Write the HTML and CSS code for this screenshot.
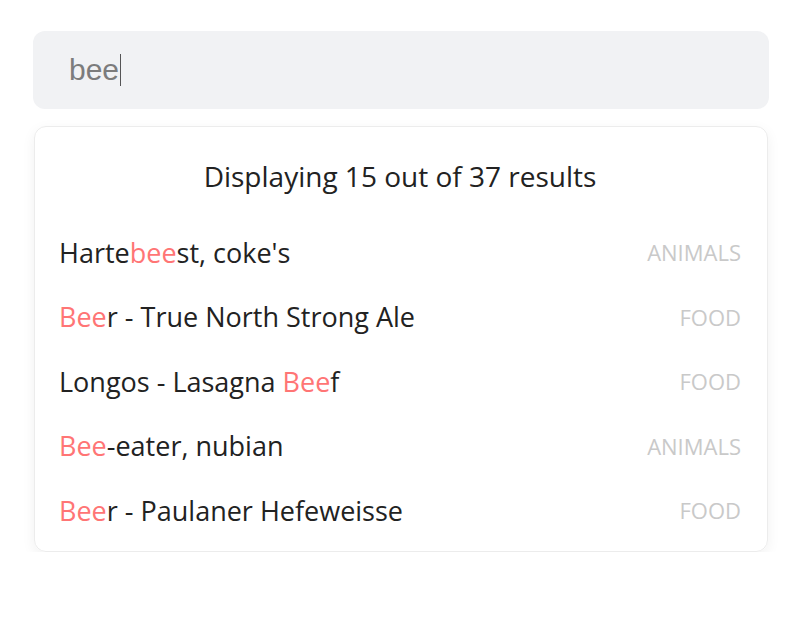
FILE: index.html
```html
<!DOCTYPE html>
<html lang="en">
<head>
<meta charset="utf-8">
<title>Search</title>
<link rel="stylesheet" href="styles.css">
</head>
<body>
<div class="page">
  <div class="search">
    <span class="query">bee</span><span class="caret"></span>
  </div>
  <div class="results">
    <div class="summary">Displaying 15 out of 37 results</div>
    <ul class="list">
      <li class="item"><span class="name">Harte<mark>bee</mark>st, coke's</span><span class="cat">ANIMALS</span></li>
      <li class="item"><span class="name"><mark>Bee</mark>r - True North Strong Ale</span><span class="cat">FOOD</span></li>
      <li class="item"><span class="name">Longos - Lasagna <mark>Bee</mark>f</span><span class="cat">FOOD</span></li>
      <li class="item"><span class="name"><mark>Bee</mark>-eater, nubian</span><span class="cat">ANIMALS</span></li>
      <li class="item"><span class="name"><mark>Bee</mark>r - Paulaner Hefeweisse</span><span class="cat">FOOD</span></li>
    </ul>
  </div>
</div>
</body>
</html>
```
FILE: styles.css
```css
* { box-sizing: border-box; }
html, body { margin: 0; padding: 0; background: #fff; }
body { font-family: "Open Sans", "Noto Sans", sans-serif; color: #222; }
.page { padding: 31px 31px 0 33px; }
.search {
  height: 78px;
  background: #f1f2f4;
  border-radius: 12px;
  display: flex;
  align-items: center;
  padding-left: 36px;
}
.query {
  font-family: "Liberation Sans", Arial, sans-serif;
  font-size: 30px;
  color: #7c7c7c;
}
.caret {
  display: inline-block;
  width: 1px;
  height: 32px;
  background: #555;
  margin-left: 1px;
}
.results {
  margin: 17px 1px 0 1px;
  border: 1px solid #ececec;
  border-radius: 12px;
  box-shadow: 0 4px 14px rgba(0,0,0,0.06);
  padding: 18px 26px 8px 24px;
}
.summary {
  text-align: center;
  font-size: 28px;
  line-height: 62px;
  margin-bottom: 13px;
}
.list { list-style: none; margin: 0; padding: 0; }
.item {
  height: 64.5px;
  display: flex;
  align-items: center;
  justify-content: space-between;
}
.name { font-size: 27px; }
mark { background: none; color: #ff7575; }
.cat { font-size: 22px; color: #c9c9c9; }
```
